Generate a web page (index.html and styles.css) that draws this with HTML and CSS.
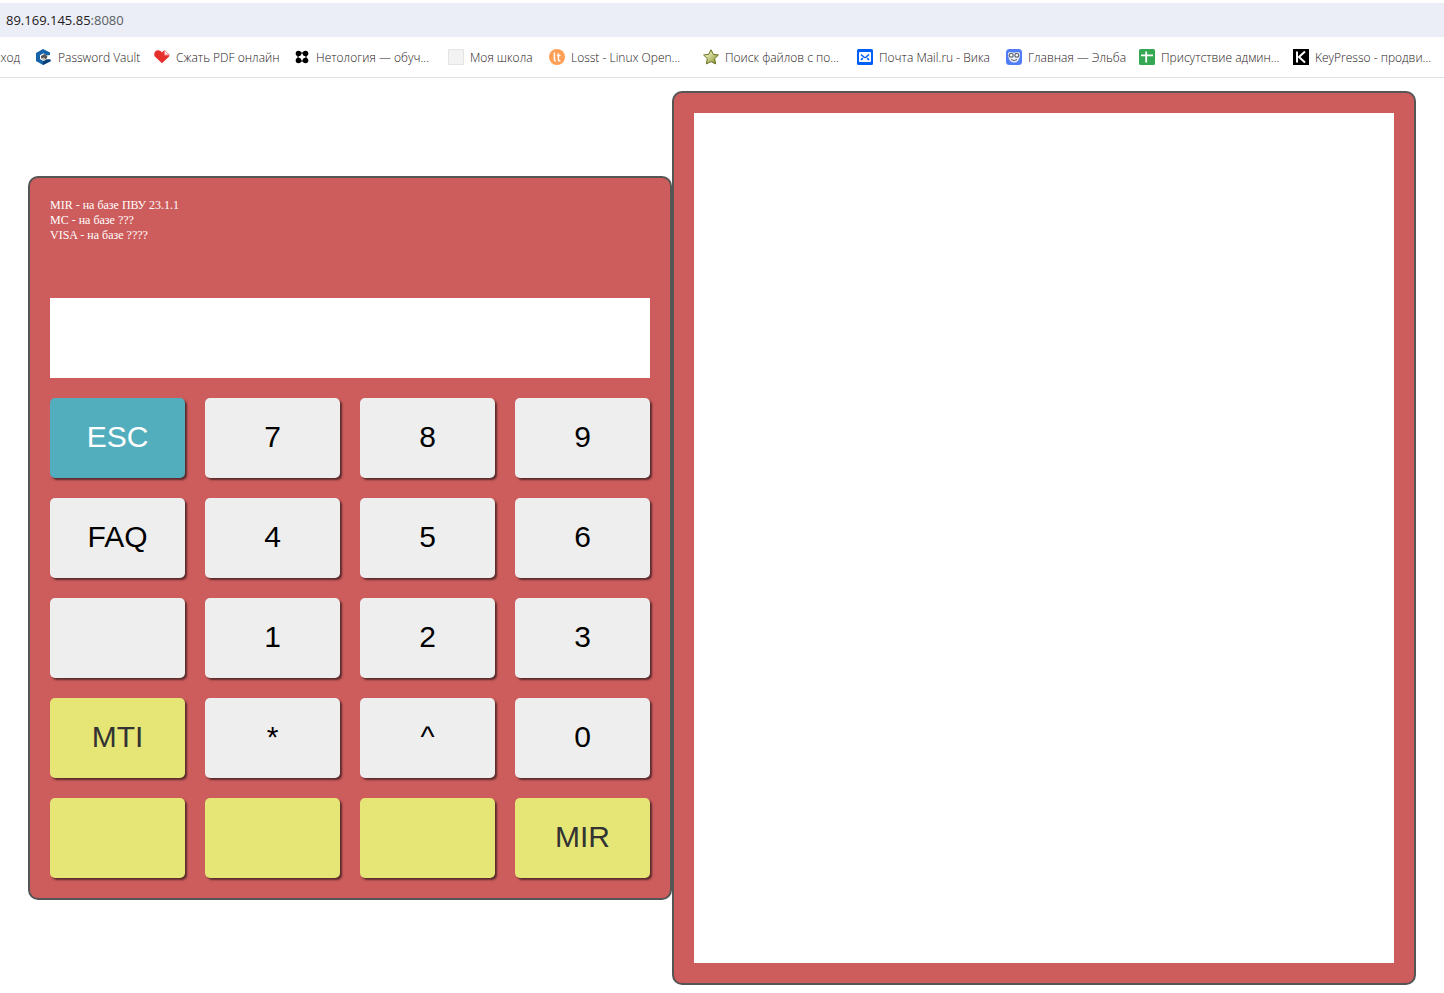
FILE: index.html
```html
<!DOCTYPE html>
<html lang="ru">
<head>
<meta charset="utf-8">
<title>89.169.145.85:8080</title>
<link rel="stylesheet" href="styles.css">
</head>
<body>
<header class="browser">
  <div class="address">89.169.145.85<span class="port">:8080</span></div>
  <nav class="bookmarks" aria-label="Закладки">
    <a class="bookmark clipped" href="#"><span>вход</span></a>
    <a class="bookmark" href="#">
      <svg class="icon" viewBox="0 0 16 16"><path fill="#1763a9" d="M7 0 14 3.600V6L10.500 6.500 7.500 4.200 4 6.300V10L7.500 12.200 10.500 10.500H14.500V12.300L7 16 0 12V4Z"/><path fill="#0b3f77" d="M7 16V12.200L10.500 10.500H14.500V12.300Z"/><path fill="#555" d="m5 7 3.500-2 3 2.500-1.500 3L8 9 5 9.500Z"/><path fill="#bbb" d="M5 9.500 8 8.500 9.500 10.500 8 12Z"/></svg>
      <span>Password Vault</span></a>
    <a class="bookmark" href="#">
      <svg class="icon" viewBox="0 0 16 16"><path fill="#e5302d" d="M8 14.300.8 7.500C-.8 4.500 1 1.200 4 1.200c1.700 0 3 .8 4 2.200.6-1 1.400-1.600 2.300-2V6.200h5.300c-.2.800-.6 1.400-1 1.900Z"/><path fill="#fff" stroke="#e66" stroke-width=".8" d="M10.600 1.500 15.300 5.900H10.600Z"/></svg>
      <span>Сжать PDF онлайн</span></a>
    <a class="bookmark" href="#">
      <svg class="icon" viewBox="0 0 16 16"><g fill="#000"><circle cx="4.500" cy="4.500" r="2.800"/><circle cx="11.500" cy="4.500" r="2.800"/><circle cx="4.500" cy="11.500" r="2.800"/><circle cx="11.500" cy="11.500" r="2.800"/></g><path fill="none" stroke="#000" stroke-width="1.500" d="M4.500 4h7M4.500 12h7M4 4.500v7M12 4.500v7" opacity=".75"/></svg>
      <span>Нетология — обуч...</span></a>
    <a class="bookmark" href="#">
      <svg class="icon" viewBox="0 0 16 16"><path fill="#f3f3f3" stroke="#e3e3e3" d="M.5.5h15v15H.5z"/></svg>
      <span>Моя школа</span></a>
    <a class="bookmark" href="#">
      <svg class="icon" viewBox="0 0 16 16"><circle cx="8" cy="8" r="8" fill="#ff9f55"/><path fill="none" stroke="#fff" stroke-width="1.500" d="M5.400 3.500v7q0 1.500 1.500 1.500M9.400 4.500v6q0 1.500 2 1.300M8 6.500h3.500"/></svg>
      <span>Losst - Linux Open...</span></a>
    <a class="bookmark" href="#">
      <svg class="icon" viewBox="0 0 16 16"><defs><linearGradient id="star" x1="0" y1="0" x2="1" y2="1"><stop offset=".15" stop-color="#f5f8ce"/><stop offset="1" stop-color="#7f8a20"/></linearGradient></defs><path fill="url(#star)" stroke="#69701c" stroke-linejoin="round" d="m8 .8 2.300 4.500 5.100.7-3.700 3.600.9 5.300L8 12.600l-4.600 2.300.9-5.300L.6 6l5.100-.7Z"/></svg>
      <span>Поиск файлов с по...</span></a>
    <a class="bookmark" href="#">
      <svg class="icon" viewBox="0 0 16 16"><rect width="16" height="16" rx="1.500" fill="#005ff9"/><rect x="2" y="3" width="12" height="10" rx="1" fill="#fff"/><path fill="none" stroke="#005ff9" stroke-width="1.600" d="m4 5.500 2.800 2.500q1.200 1 2.400 0L12 5.500M4 11l1.800-1.900M12 11l-1.800-1.900"/></svg>
      <span>Почта Mail.ru - Вика</span></a>
    <a class="bookmark" href="#">
      <svg class="icon" viewBox="0 0 16 16"><rect width="16" height="16" rx="3.500" fill="#507df5"/><path fill="#e8ecf5" d="M2 4.500Q2 3 4 3q2.500 0 4 .8Q9.500 3 12 3q2 0 2 1.500Q14 13.500 8 13.500T2 4.500Z"/><g fill="#fff" stroke="#626875" stroke-width="1.200"><circle cx="5.200" cy="6.200" r="1.900"/><circle cx="10.800" cy="6.200" r="1.900"/></g><path fill="none" stroke="#626875" d="M5 10.500q3 2.300 6 0"/></svg>
      <span>Главная — Эльба</span></a>
    <a class="bookmark" href="#">
      <svg class="icon" viewBox="0 0 16 16"><rect width="16" height="16" rx="1.500" fill="#34a853"/><path fill="none" stroke="#fff" stroke-width="1.800" d="M2 6.300h12M7.200 2.500v11"/></svg>
      <span>Присутствие админ...</span></a>
    <a class="bookmark" href="#">
      <svg class="icon" viewBox="0 0 16 16"><path d="M0 0h16v16H0z"/><path fill="none" stroke="#fff" stroke-width="2" d="M4 2.500v11M12 2.500 6 8l6 5.500"/></svg>
      <span>KeyPresso - продви...</span></a>
  </nav>
</header>
<main class="workspace">
  <section class="panel calculator">
    <p class="info">MIR - на базе ПВУ 23.1.1<br>MC - на базе ???<br>VISA - на базе ????</p>
    <input class="display" type="text" aria-label="Ввод">
    <div class="keys">
      <button class="key escape">ESC</button>
      <button class="key">7</button>
      <button class="key">8</button>
      <button class="key">9</button>
      <button class="key">FAQ</button>
      <button class="key">4</button>
      <button class="key">5</button>
      <button class="key">6</button>
      <button class="key" aria-label="Пустая клавиша"></button>
      <button class="key">1</button>
      <button class="key">2</button>
      <button class="key">3</button>
      <button class="key mode">MTI</button>
      <button class="key">*</button>
      <button class="key">^</button>
      <button class="key">0</button>
      <button class="key mode" aria-label="Пустая клавиша"></button>
      <button class="key mode" aria-label="Пустая клавиша"></button>
      <button class="key mode" aria-label="Пустая клавиша"></button>
      <button class="key mode">MIR</button>
    </div>
  </section>
  <section class="panel">
    <textarea class="output" aria-label="Результат" readonly></textarea>
  </section>
</main>
</body>
</html>
```
FILE: styles.css
```css
* {
  box-sizing: border-box;
}

body {
  margin: 0;
  background: #fff;
}

.browser {
  padding-top: 3px;
  border-bottom: 1px solid #dfe1e5;
  font-family: "Open Sans", "Noto Sans", sans-serif;
  font-size: 12px;
  font-weight: 300;
  color: #1f2021;
}

.address {
  height: 34px;
  padding-left: 6px;
  background: #ebeef7;
  font-size: 13px;
  font-weight: 400;
  line-height: 34px;
}

.port {
  color: #5a5d61;
}

.bookmarks {
  display: grid;
  grid-template-columns: 36fr 118fr 140fr 154fr 101fr 154fr 154fr 149fr 133fr 154fr 151fr;
  align-items: center;
  height: 40px;
}

.bookmark {
  display: flex;
  align-items: center;
  gap: 6px;
  min-width: 0;
  color: inherit;
  text-decoration: none;
  white-space: nowrap;
}

.clipped {
  justify-content: flex-end;
  padding-right: 16px;
  overflow: hidden;
}

.icon {
  flex: none;
  width: 16px;
  height: 16px;
}

.workspace {
  display: grid;
  grid-template-columns: 644fr 744fr;
  align-items: center;
  padding: 13px 28px 8px;
}

.panel {
  padding: 20px;
  border: 2px solid #555;
  border-radius: 10px;
  background: #cd5c5c;
}

.info {
  height: 100px;
  margin: 0;
  font-family: "Liberation Serif", serif;
  font-size: 12px;
  line-height: 15px;
  color: #fff;
}

.display {
  display: block;
  width: 100%;
  height: 80px;
  padding: 0 20px;
  border: 0;
  background: #fff;
  font-family: "Liberation Sans", sans-serif;
  font-size: 30px;
  text-align: right;
}

.keys {
  display: grid;
  grid-template-columns: repeat(4, 1fr);
  grid-auto-rows: 80px;
  gap: 20px;
  padding-top: 20px;
}

.key {
  padding: 0 0 2px;
  border: 0;
  border-radius: 5px;
  background: #eee;
  box-shadow: 2px 2px 2px #5b2a2c;
  font-family: "Liberation Sans", sans-serif;
  font-size: 30px;
  color: #000;
}

.escape {
  background: #52aebc;
  color: #fff;
}

.mode {
  background: #e5e675;
  color: #333;
}

.output {
  display: block;
  width: 100%;
  height: 850px;
  padding: 20px;
  border: 0;
  background: #fff;
  resize: none;
}
```
